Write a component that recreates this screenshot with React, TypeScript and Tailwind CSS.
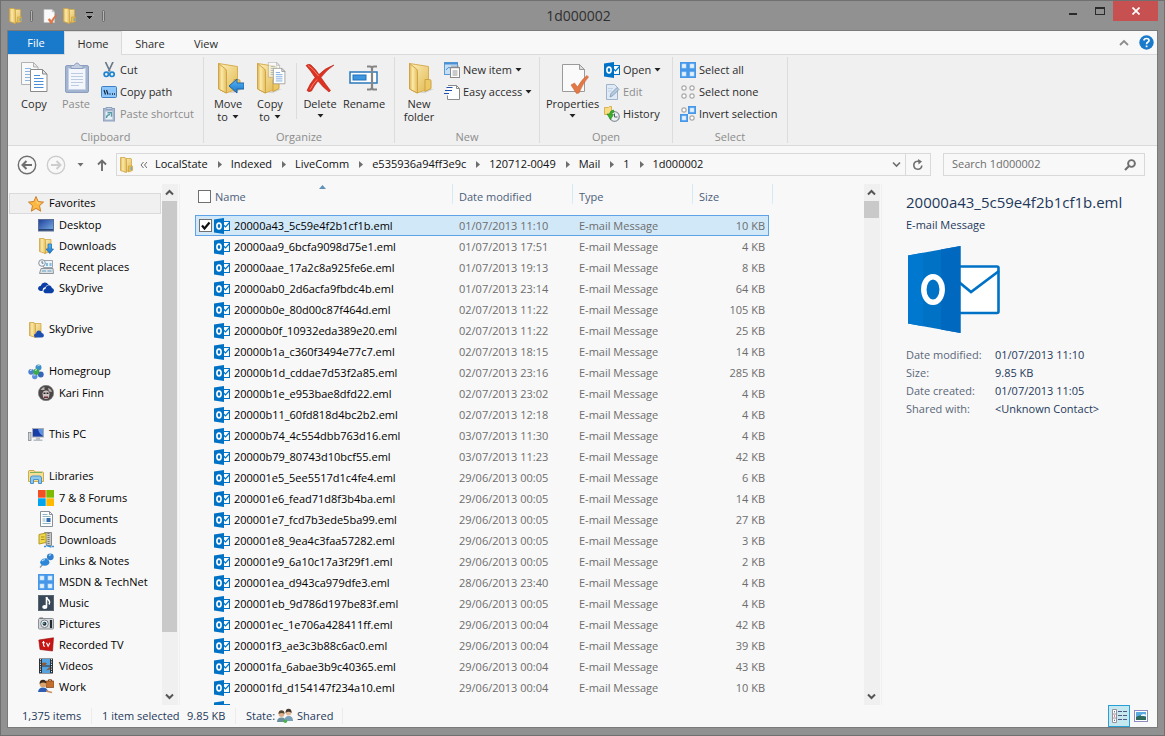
import React from 'react'

type IconProps = { className?: string }

const small = 'size-4 shrink-0'

function Gradients() {
  return (
    <svg className="absolute size-0" aria-hidden="true">
      <defs>
        <linearGradient id="folderFront" x1="0" x2="1">
          <stop offset="0" stopColor="#dcb253" />
          <stop offset="0.4" stopColor="#fbeaa9" />
          <stop offset="1" stopColor="#e5bd5b" />
        </linearGradient>
        <linearGradient id="folderBack" x1="0" y1="0" x2="1" y2="1">
          <stop offset="0" stopColor="#fdf0bd" />
          <stop offset="1" stopColor="#e2b84f" />
        </linearGradient>
        <linearGradient id="blueArrow" x1="0" y1="0" x2="0" y2="1">
          <stop offset="0" stopColor="#5bb8f5" />
          <stop offset="1" stopColor="#1b74c9" />
        </linearGradient>
        <linearGradient id="screen" x1="0" y1="0" x2="1" y2="1">
          <stop offset="0" stopColor="#1c3f9c" />
          <stop offset="1" stopColor="#7fb2e6" />
        </linearGradient>
      </defs>
    </svg>
  )
}

/* ---------- 32px ribbon icons ---------- */

function FolderShape() {
  return (
    <g strokeLinejoin="round">
      <path d="M16 31l11-4 4 0-9 4z" fill="#c9c9c9" opacity="0.7" />
      <path d="M6.500 1.500L25.500 4.500V27L14 31 6.500 27z" fill="url(#folderBack)" stroke="#d8ae50" />
      <path d="M22 17.500h4.500q1.500 0 1.500 1.500v7.500l-6 3z" fill="#ecc964" stroke="#cda242" />
      <path d="M6.500 1.500l7 5.500q1 1 1 2.500V31L7.500 27.500q-1-.5-1-1.500z" fill="url(#folderFront)" stroke="#cfa448" />
    </g>
  )
}

function PageShape({ x, y, faded }: { x: number; y: number; faded?: boolean }) {
  return (
    <g transform={`translate(${x} ${y})`} opacity={faded ? 0.6 : 1}>
      <path d="M.5.500h12l4.500 4.500v17.500H.500z" fill="#fff" stroke="#8a8a8a" />
      <path d="M12.500.500V5H17z" fill="#e4e4e4" stroke="#8a8a8a" />
      <path d="M4 6.500h6M4 9.500h9.500M4 12.500h9.500M4 15.500h9.500M4 18.500h9.500" stroke="#4a8fd6" />
    </g>
  )
}

function CopyIcon() {
  return (
    <svg className="size-8" viewBox="0 0 32 32">
      <PageShape x={3} y={0} faded />
      <PageShape x={12} y={7} />
    </svg>
  )
}

function PasteIcon() {
  return (
    <svg className="size-8" viewBox="0 0 32 32">
      <rect x="5.500" y="3.500" width="23" height="27" rx="1.500" fill="#a3b4d0" stroke="#8c9fc0" />
      <rect x="8.500" y="6.500" width="17" height="21" fill="#f3f7fc" stroke="#c5d2e5" />
      <path d="M11 11.500h12M11 14.500h12M11 17.500h12M11 20.500h12M11 23.500h8" stroke="#bccbe0" />
      <path d="M11 6.500V3.500h3q3-5 6 0h3v3z" fill="#c3cedf" stroke="#8c9fc0" />
    </svg>
  )
}

function MoveToIcon() {
  return (
    <svg className="size-8" viewBox="0 0 32 32">
      <FolderShape />
      <path d="M17 24l8-7v4h7v6h-7v4z" fill="url(#blueArrow)" stroke="#1a66ad" strokeLinejoin="round" />
    </svg>
  )
}

function CopyToIcon() {
  return (
    <svg className="size-8" viewBox="0 0 32 32">
      <g transform="translate(-3 0)">
        <FolderShape />
      </g>
      <g transform="translate(14 0) scale(.68)">
        <PageShape x={0} y={0} faded />
      </g>
      <g transform="translate(19 6) scale(.7)">
        <PageShape x={0} y={0} />
      </g>
    </svg>
  )
}

function NewFolderIcon() {
  return (
    <svg className="size-8" viewBox="0 0 32 32">
      <FolderShape />
    </svg>
  )
}

function DeleteIcon() {
  return (
    <svg className="size-8" viewBox="0 0 32 32">
      <path
        d="M2 3.500q3-2 5-.5 5 4.500 8 9.500Q21 6 30 3q-8 5.500-13 12.500 4 6 9.500 13L25 30q-6-4.500-11-11-4 5-6.500 10-3 1.500-4.500-.5 2.500-6.500 8-13Q7 9 2 3.500z"
        fill="#dd3320"
        stroke="#b32214"
        strokeWidth="0.600"
      />
      <path d="M4 3.500q5 3 10.500 10.500M6 27.500q3-6 7-10" fill="none" stroke="#f2816d" />
    </svg>
  )
}

function RenameIcon() {
  return (
    <svg className="size-8" viewBox="0 0 32 32">
      <rect x="2" y="10" width="27" height="11" fill="#fff" stroke="#2a78bd" strokeWidth="1.500" />
      <rect x="5" y="13" width="13" height="5" fill="#3d96df" stroke="#2173b9" />
      <path d="M19 4.500h3q2 0 2 2v19q0 2 2 2h3M29 4.500h-3q-2 0-2 2M24 25q0 2.500-2 2.500h-3" fill="none" stroke="#858585" strokeWidth="2.200" />
    </svg>
  )
}

function PropertiesIcon({ className = 'size-8' }: IconProps) {
  return (
    <svg className={className} viewBox="0 0 32 32">
      <path d="M5.500 2.500h17l5 5v22h-22z" fill="#fafafa" stroke="#9a9a9a" />
      <path d="M22.500 2.500v5h5z" fill="#ddd" stroke="#9a9a9a" />
      <path d="M14 23l3.500-2 3 4q4-7.500 9.500-11.500l1.500 1.500Q26 21 22 31l-2.500.5z" fill="#e27747" stroke="#cf6535" strokeWidth="0.600" />
    </svg>
  )
}

/* ---------- 16px icons ---------- */

function SmallFolder({ className = small }: IconProps) {
  return (
    <svg className={className} viewBox="0 0 16 16">
      <path d="M5.500 1.500h7.500l.5.500v11l-7 2z" fill="url(#folderBack)" stroke="#d2a848" strokeWidth="0.800" />
      <path d="M10.500 9h4v4.500l-4 1.500z" fill="#e6bd55" stroke="#cda242" strokeWidth="0.700" />
      <path d="M13.200 10v3" stroke="#4aa3e0" />
      <path d="M2.500.500h4.500q1.500 1 1.500 2.500v12.500l-6-2z" fill="url(#folderFront)" stroke="#cfa448" strokeWidth="0.800" />
    </svg>
  )
}

function OutlookIcon() {
  return (
    <svg className={small} viewBox="0 0 16 16">
      <rect x="8" y="3.500" width="7.500" height="9" fill="#fff" stroke="#0072c6" />
      <path d="M9 6.500l2.500 2.500L15.500 4.500" fill="none" stroke="#0072c6" strokeWidth="1.200" />
      <path d="M0 1.500L10 0v16L0 14.500z" fill="#0072c6" />
      <ellipse cx="5" cy="8" rx="2.100" ry="2.900" fill="none" stroke="#fff" strokeWidth="1.600" />
    </svg>
  )
}

function OutlookLarge() {
  return (
    <svg className="h-[87px] w-[92px]" viewBox="0 0 92 87">
      <rect x="45" y="20.500" width="45.500" height="46.500" rx="1.500" fill="#fff" stroke="#0072c6" strokeWidth="2.600" />
      <path d="M46 32l17 14 28-21" fill="none" stroke="#0072c6" strokeWidth="2.800" />
      <path d="M0 9.500L52.500 0v87L0 77.500z" fill="#0072c6" />
      <path d="M0 9.500l15-2.700v73.400L0 77.500z" fill="#0078cf" />
      <path d="M33 3.500L52.500 0v87L33 83.500z" fill="#0069bf" />
      <ellipse cx="25" cy="43.500" rx="9.200" ry="12.800" fill="none" stroke="#fff" strokeWidth="5.500" />
    </svg>
  )
}

function CutIcon() {
  return (
    <svg className={small} viewBox="0 0 16 16">
      <path d="M4.500 0l4.500 9.500M12 0L7.500 9.500" stroke="#68798b" strokeWidth="1.700" />
      <circle cx="5.300" cy="12.300" r="2.200" fill="none" stroke="#1f83cf" strokeWidth="1.700" />
      <circle cx="11" cy="12.300" r="2.200" fill="none" stroke="#1f83cf" strokeWidth="1.700" />
    </svg>
  )
}

function CopyPathIcon() {
  return (
    <svg className={small} viewBox="0 0 16 16">
      <rect x=".5" y="2.500" width="15" height="11" rx="1" fill="#8cc6fa" stroke="#3f7fc4" />
      <path d="M3 6l1.500 4.500M5.500 6L7 10.500" stroke="#10243c" strokeWidth="1.200" />
      <path d="M8.500 10h1M11 10h1M13 10h1" stroke="#10243c" strokeWidth="1.400" />
    </svg>
  )
}

function PasteShortcutIcon() {
  return (
    <svg className={small} viewBox="0 0 16 16">
      <rect x="2.500" y="2.500" width="11" height="12.500" fill="#a9b8cf" stroke="#8ea3bf" />
      <path d="M5 3.500v-2h6v2z" fill="#c5d0df" stroke="#8ea3bf" />
      <rect x="4.500" y="5.500" width="7" height="8" fill="#e7f1f5" />
      <path d="M5.500 12q0-3 3.500-3.500M6.500 6.800h4v4" fill="none" stroke="#5b9aa8" strokeWidth="1.400" />
    </svg>
  )
}

function NewItemIcon() {
  return (
    <svg className={small} viewBox="0 0 16 16">
      <rect x=".5" y=".5" width="13" height="12" fill="#c7dff5" stroke="#5b9bd5" />
      <path d="M0 1.500h14" stroke="#4a90d3" strokeWidth="2" />
      <path d="M2 8q2-4 5-2" fill="none" stroke="#4a90d3" />
      <rect x="6.500" y="5.500" width="9" height="10" fill="#fff" stroke="#8a8a8a" />
      <path d="M8 3.500v3M10 3.500v3M12 3.500v3M14 3.500v3M8.500 9h5M8.500 11h5M8.500 13h5" stroke="#8a8a8a" strokeWidth="0.900" />
    </svg>
  )
}

function EasyAccessIcon() {
  return (
    <svg className={small} viewBox="0 0 16 16">
      <path d="M3.500 1.500h9l3 3v11h-12z" fill="#fff" />
      <path d="M4 1.500h8.500l3 3v11h-12V11.500M12.500 1.500v3h3" fill="none" stroke="#8a8a8a" />
      <path d="M2.500 3.500h6M1 6.500h7M0 9.500h5" stroke="#1d4fae" strokeWidth="1.200" />
    </svg>
  )
}

function EditIcon() {
  return (
    <svg className={small} viewBox="0 0 16 16">
      <path d="M2.500.500h8l3 3v12h-11z" fill="#dfeaf5" stroke="#9fb3ca" />
      <path d="M4 4.500h5M4 7h4" stroke="#c0d2e6" />
      <path d="M6 13l1-3.500 6-6 2 2-6 6z" fill="#b6cadd" stroke="#7c97b3" strokeWidth="0.800" />
    </svg>
  )
}

function HistoryIcon() {
  return (
    <svg className={small} viewBox="0 0 16 16">
      <path d="M.5 1.500h4l1-1h2v8h-7z" fill="#f7dc83" stroke="#d1a53d" strokeWidth="0.800" />
      <circle cx="10.500" cy="10.500" r="4.800" fill="#edf1f4" stroke="#8b949c" strokeWidth="1.300" />
      <path d="M10.500 7.500v3.500h3" fill="none" stroke="#555f69" />
      <path d="M9.500 4q-3.500.5-4 4H3l3.500 5.500L9.500 8.500H7.500q.5-2 2.500-2.500z" fill="#3cb02d" stroke="#1f8416" strokeWidth="0.600" />
    </svg>
  )
}

function SelectSquares({ filled }: { filled: boolean[] }) {
  const spots = [[0, 0], [8, 0], [0, 8], [8, 8]]
  return (
    <svg className={small} viewBox="0 0 16 16">
      {spots.map(([x, y], i) =>
        filled[i] ? (
          <g key={i}>
            <rect x={x} y={y} width="8" height="8" fill="#4797e8" />
            <rect x={x + 2} y={y + 2} width="4" height="4" fill="#e3f1fd" stroke="#b7dafa" strokeWidth="0.600" />
          </g>
        ) : (
          <rect key={i} x={x + 2} y={y + 2} width="4" height="4" rx="1" fill="#fff" stroke="#909090" />
        )
      )}
    </svg>
  )
}

function StarIcon() {
  return (
    <svg className={small} viewBox="0 0 16 16">
      <path d="M8 .5l2.200 5 5.300.6-4 3.600 1.200 5.500L8 12.400l-4.700 2.800 1.200-5.500-4-3.600 5.300-.6z" fill="#fbb944" stroke="#c77822" strokeWidth="0.900" strokeLinejoin="round" />
      <path d="M8 2.500l1.500 4 3.500.5-4 .5z" fill="#fde7a4" />
    </svg>
  )
}

function DesktopIcon() {
  return (
    <svg className={small} viewBox="0 0 16 16">
      <rect x=".5" y="2.500" width="15" height="11.500" fill="url(#screen)" stroke="#5c6f92" />
      <path d="M1 12.800h14" stroke="#27406e" strokeWidth="1.500" />
    </svg>
  )
}

function DownloadsIcon() {
  return (
    <svg className={small} viewBox="0 0 16 16">
      <path d="M5.500 1.500h7.500v12l-6.500 2z" fill="url(#folderBack)" stroke="#d2a848" strokeWidth="0.800" />
      <path d="M1.500.500h4.500l1.500 2v13l-6-2z" fill="url(#folderFront)" stroke="#cfa448" strokeWidth="0.800" />
      <path d="M10 6h3.500v5h2L11.800 15.500 8 11h2z" fill="url(#blueArrow)" stroke="#1a66ad" strokeWidth="0.700" />
    </svg>
  )
}

function RecentIcon() {
  return (
    <svg className={small} viewBox="0 0 16 16">
      <path d="M5.500 1.500h9v7h-9z" fill="#eef3f7" stroke="#9ba5ad" />
      <path d="M8 4h2v3H8zM11.500 4h2v3h-2z" fill="#7dbbe3" />
      <path d="M3 9.500h12l.5 5H1.500z" fill="#dfe3e6" stroke="#8c959c" />
      <path d="M4 12h4M9.500 12h4" stroke="#5f9dc4" />
      <circle cx="4" cy="4" r="3.300" fill="#f4f7fa" stroke="#8693a0" />
      <path d="M4 2v2.200h1.500" fill="none" stroke="#44566b" strokeWidth="0.800" />
    </svg>
  )
}

function SkyDriveIcon() {
  return (
    <svg className={small} viewBox="0 0 16 16">
      <path d="M4.500 11H3q-3-.5-3-2.800Q.2 6 2.800 5.800 3.500 3 6.500 2.600q2.500-.2 3.700 1.800l1 .1Q8 5 7.200 7.200 4.600 7.500 4.500 11z" fill="#0c3fa6" />
      <path d="M7.500 13.200q-2-.3-2.100-2.200.2-2 2.200-2.300Q8 5.500 11 5.300q2.200.1 3 2.700 2 .5 2 2.600-.2 2.300-2.300 2.600z" fill="#0c3fa6" />
    </svg>
  )
}

function SkyFolderIcon() {
  return (
    <svg className={small} viewBox="0 0 16 16">
      <path d="M5.500 1.500h7.500v12l-6.500 2z" fill="url(#folderBack)" stroke="#d2a848" strokeWidth="0.800" />
      <path d="M1.500.500h4.500l1.500 2v13l-6-2z" fill="url(#folderFront)" stroke="#cfa448" strokeWidth="0.800" />
      <path d="M8 15.500q-2-.2-2-2t2-2q.5-3 3-3 2.200 0 2.700 2.500 2.200.4 2.200 2.400 0 2-2 2.100z" fill="#1c4fb0" />
    </svg>
  )
}

function HomegroupIcon() {
  return (
    <svg className={small} viewBox="0 0 16 16">
      <circle cx="10.500" cy="3.500" r="3" fill="#3c8fc9" />
      <circle cx="3.200" cy="7.800" r="2.900" fill="#4b7fd0" />
      <circle cx="12.800" cy="10.500" r="2.900" fill="#3566b8" />
      <circle cx="6.800" cy="12.600" r="2.700" fill="#5b8fdd" />
      <circle cx="8.300" cy="7.800" r="3.100" fill="#3faa4b" />
      <path d="M2 6.800q1-1.200 2-1M9.500 2q1-.8 2-.5M7 6.500q1-1 2-.8M5.500 11.800q1-1 2-.8" fill="none" stroke="#d6ecfb" />
    </svg>
  )
}

function UserPhotoIcon() {
  return (
    <svg className={small} viewBox="0 0 16 16">
      <circle cx="8" cy="8" r="7.700" fill="#4b4747" stroke="#807d7d" strokeWidth="0.600" />
      <path d="M2.500 5q2-3 4-3v3zM10 3q3 .5 4 4l-3-.5z" fill="#b9b3b3" />
      <path d="M4.500 8.500Q5 5.500 8 5.500t3.500 3L11 12q-1 2-3 2t-3-2z" fill="#cfc4c4" />
      <path d="M5.500 8.300h2M8.500 8.300h2" stroke="#2b2424" strokeWidth="1.400" />
      <path d="M6 11.500h4v1.500H6z" fill="#6d3038" />
    </svg>
  )
}

function PcIcon() {
  return (
    <svg className={small} viewBox="0 0 16 16">
      <rect x=".5" y="5.500" width="2.500" height="8" fill="#cfd4d8" stroke="#868d93" strokeWidth="0.800" />
      <rect x="4.500" y="1.500" width="11" height="8.500" fill="#1a3ea8" stroke="#a7adb3" />
      <path d="M10 2l5 0v7q-4-2-5-7z" fill="#5f92e0" />
      <path d="M8 10.500h4v2h2.500v1.500h-9v-1.500H8z" fill="#b9bfc4" />
    </svg>
  )
}

function LibrariesIcon() {
  return (
    <svg className={small} viewBox="0 0 16 16">
      <path d="M.5 12.500V2l.5-.5h5l1 1.500h8l.5.500v9z" fill="#f6df94" stroke="#d1aa4d" />
      <path d="M2 3.500h12" stroke="#79b25b" />
      <path d="M2.500 14.500V9q0-2 2-2h7q2 0 2 2v5.500h-3v-4h-5v4z" fill="#8cc7ee" stroke="#4d93c6" />
    </svg>
  )
}

function WindowsIcon() {
  return (
    <svg className={small} viewBox="0 0 16 16">
      <path d="M0 0h7.700v7.700H0z" fill="#f25022" />
      <path d="M8.300 0H16v7.700H8.300z" fill="#7fba00" />
      <path d="M0 8.300h7.700V16H0z" fill="#00a4ef" />
      <path d="M8.300 8.300H16V16H8.300z" fill="#ffb900" />
    </svg>
  )
}

function DocumentIcon() {
  return (
    <svg className={small} viewBox="0 0 16 16">
      <path d="M2.500.500h9l3 3v12h-12z" fill="#fff" stroke="#8a9299" />
      <path d="M11.500.500v3h3" fill="none" stroke="#8a9299" />
      <path d="M4.500 3.500h5M4.500 5.500h8M4.500 8h3M4.500 10h3M4.500 12.500h8" stroke="#8fb3bd" />
      <rect x="8.500" y="7" width="4" height="4" fill="#2e6bb0" />
    </svg>
  )
}

function ZipIcon() {
  return (
    <svg className={small} viewBox="0 0 16 16">
      <path d="M6.500.500h7v13h-5z" fill="#c5c7c4" stroke="#878a86" />
      <path d="M10.500 1v12" stroke="#77797a" strokeDasharray="1 1" strokeWidth="2" />
      <path d="M1 2.500l7-1.500v9.500L1 12z" fill="#f0d64b" stroke="#b59a25" />
      <path d="M3 5h3.500M3 7.500h3.500" stroke="#a58c1f" />
      <path d="M6 14.500h2M14 14.500h2M8.500 13.500l5 1.500" stroke="#3f8fd6" strokeWidth="1.600" />
    </svg>
  )
}

function PinIcon() {
  return (
    <svg className={small} viewBox="0 0 16 16">
      <path d="M2 14.500l3.500-4" stroke="#8d969d" strokeWidth="1.400" />
      <circle cx="12.300" cy="3.800" r="3.400" fill="#2f7fd0" />
      <path d="M8 5l3 3.500-1.500 2-3-3z" fill="#1f62b0" />
      <ellipse cx="6.800" cy="9.200" rx="4.600" ry="3.600" fill="#2e86d8" />
      <path d="M4 8q1.500-1.500 3-1.200M11 2.500q1-1 2-.5" fill="none" stroke="#b8dcfa" strokeWidth="1.200" />
    </svg>
  )
}

function MusicIcon() {
  return (
    <svg className={small} viewBox="0 0 16 16">
      <rect x=".5" y=".5" width="15" height="15" fill="#384858" stroke="#59656f" />
      <path d="M8.500 2q.5 2 2.500 3.500 1.500 2 0 4" fill="none" stroke="#fff" strokeWidth="1.600" />
      <path d="M8.500 2v9.500" stroke="#fff" strokeWidth="1.600" />
      <ellipse cx="6.800" cy="12" rx="2.600" ry="1.900" fill="#fff" />
    </svg>
  )
}

function CameraIcon() {
  return (
    <svg className={small} viewBox="0 0 16 16">
      <rect x=".5" y="2.500" width="15" height="10.500" rx="1" fill="#d3d7da" stroke="#8a9095" />
      <rect x="1.500" y="1.500" width="3.500" height="1.500" fill="#777" />
      <path d="M13 4v8" stroke="#252a2f" strokeWidth="2.200" />
      <circle cx="6.500" cy="7.800" r="3.800" fill="#f1f3f4" stroke="#777f86" />
      <circle cx="6.500" cy="7.800" r="2" fill="#1e3a45" />
      <circle cx="5.900" cy="7.200" r=".7" fill="#8fd0ea" />
    </svg>
  )
}

function TvIcon() {
  return (
    <svg className={small} viewBox="0 0 16 16">
      <path d="M.8 3L15.500.8 14.500 14 2 12.500z" fill="#c91414" stroke="#930c0c" strokeWidth="0.600" />
      <path d="M5.500 4v4q0 1.300 1.600 1.200M4 5.700h3M8.500 5.700l1.600 3.500 1.800-3.500" fill="none" stroke="#fff" strokeWidth="1.100" />
    </svg>
  )
}

function VideoIcon() {
  return (
    <svg className={small} viewBox="0 0 16 16">
      <rect x="1" y=".5" width="14" height="15" fill="#2c3137" />
      <path d="M2.500 1v14M13.500 1v14" stroke="#dfe4e8" strokeDasharray="1.200 1.200" />
      <rect x="4" y="1" width="8" height="6.500" fill="#53a4e0" />
      <rect x="4" y="8.500" width="8" height="6.500" fill="#53a4e0" />
      <path d="M4 7.500V5q3-1 5 .5L7 7.500zM12 8.500v3l-4 1z" fill="#8a5a3a" />
    </svg>
  )
}

function WorkIcon() {
  return (
    <svg className={small} viewBox="0 0 16 16">
      <rect x="8" y="2" width="8" height="6.500" rx=".5" fill="#c46f2e" stroke="#7d4318" strokeWidth="0.700" />
      <path d="M10.500 2V.8h3V2" fill="none" stroke="#7d4318" />
      <path d="M0 13q.5-4.500 5-4.500t5 4.500z" fill="#2f5fb4" />
      <path d="M8 12l6 1.500" stroke="#c89060" strokeWidth="1.600" />
      <circle cx="5" cy="5" r="3.300" fill="#dba36e" />
      <path d="M1.600 5Q1.500.8 5 .8q3.500 0 3.400 3.700Q5 2.500 1.600 5z" fill="#3b2819" />
    </svg>
  )
}

function SharedIcon() {
  return (
    <svg className={small} viewBox="0 0 16 16">
      <path d="M0 14q0-4.500 4.500-4.500T9 14z" fill="#6c8f9e" />
      <circle cx="4.500" cy="6" r="2.900" fill="#dcb08c" />
      <path d="M1.500 6Q1.300 2.500 4.500 2.300 7.700 2.500 7.500 6 5 3.800 1.500 6z" fill="#5a4630" />
      <path d="M7.500 13q0-5 4.300-5t4.200 5z" fill="#7a9fb8" />
      <circle cx="11.600" cy="4.500" r="2.900" fill="#e3bb98" />
      <path d="M8.600 5Q8.400.9 11.600.8q3.200.1 3 4.200-3-2.500-6 0z" fill="#46382c" />
      <circle cx="8.300" cy="13.300" r="1.800" fill="#49b34a" />
    </svg>
  )
}

function Caret({ className = 'text-[#222]' }: IconProps) {
  return (
    <svg className={`inline-block h-1 w-[7px] shrink-0 ${className}`} viewBox="0 0 7 4">
      <path d="M.5 0h6l-3 3.500z" fill="currentColor" />
    </svg>
  )
}

/* ---------- ribbon ---------- */

interface BigButtonProps {
  icon: React.ReactNode
  lines: string[]
  caret?: boolean
  disabled?: boolean
  width?: string
}

function BigButton({ icon, lines, caret, disabled, width = 'w-[42px]' }: BigButtonProps) {
  const caretAlone = caret && lines.length === 1
  return (
    <button disabled={disabled} className={`flex flex-col items-center pt-[3px] leading-[13px] ${width} ${disabled ? 'text-[#8c8c8c]' : ''}`}>
      {icon}
      <span className="mt-[3px] whitespace-nowrap">{lines[0]}</span>
      {lines[1] && (
        <span className="flex items-center gap-1 whitespace-nowrap">
          {lines[1]}
          {caret && <Caret />}
        </span>
      )}
      {caretAlone && <Caret className="mt-1 text-[#222]" />}
    </button>
  )
}

interface SmallButtonProps {
  icon: React.ReactNode
  label: string
  caret?: boolean
  disabled?: boolean
}

function SmallButton({ icon, label, caret, disabled }: SmallButtonProps) {
  return (
    <button disabled={disabled} className={`flex h-[22px] items-center gap-[3px] px-0.5 whitespace-nowrap ${disabled ? 'text-[#8c8c8c]' : ''}`}>
      {icon}
      <span>{label}</span>
      {caret && <Caret />}
    </button>
  )
}

function RibbonGroup({ label, width, children }: { label: string; width: string; children: React.ReactNode }) {
  return (
    <section className={`my-0.5 flex shrink-0 flex-col border-r border-[#dcdcdc] ${width}`}>
      <div className="flex flex-1 items-start pt-0.5 pl-[3px]">{children}</div>
      <h2 className="text-center leading-[13px] text-[#8c8c8c]">{label}</h2>
    </section>
  )
}

function Ribbon() {
  return (
    <div className="flex h-[92px] shrink-0 border-y border-[#d9dadb] bg-[#f0f0f0] text-[#2b2b2b]">
      <RibbonGroup label="Clipboard" width="w-[196px]">
        <div className="flex pl-0.5">
          <BigButton icon={<CopyIcon />} lines={['Copy']} />
          <BigButton icon={<PasteIcon />} lines={['Paste']} disabled />
        </div>
        <div className="flex flex-col pl-0.5">
          <SmallButton icon={<CutIcon />} label="Cut" />
          <SmallButton icon={<CopyPathIcon />} label="Copy path" />
          <SmallButton icon={<PasteShortcutIcon />} label="Paste shortcut" disabled />
        </div>
      </RibbonGroup>
      <RibbonGroup label="Organize" width="w-[191px]">
        <BigButton icon={<MoveToIcon />} lines={['Move', 'to']} caret />
        <BigButton icon={<CopyToIcon />} lines={['Copy', 'to']} caret />
        <div className="mt-1 mr-0.5 ml-[5px] h-14 w-px bg-[#dcdcdc]" />
        <BigButton icon={<DeleteIcon />} lines={['Delete']} caret />
        <BigButton icon={<RenameIcon />} lines={['Rename']} width="w-[46px]" />
      </RibbonGroup>
      <RibbonGroup label="New" width="w-[145px]">
        <BigButton icon={<NewFolderIcon />} lines={['New', 'folder']} />
        <div className="flex flex-col pl-0.5">
          <SmallButton icon={<NewItemIcon />} label="New item" caret />
          <SmallButton icon={<EasyAccessIcon />} label="Easy access" caret />
        </div>
      </RibbonGroup>
      <RibbonGroup label="Open" width="w-[133px]">
        <BigButton icon={<PropertiesIcon />} lines={['Properties']} caret width="w-[59px]" />
        <div className="flex flex-col">
          <SmallButton icon={<OutlookIcon />} label="Open" caret />
          <SmallButton icon={<EditIcon />} label="Edit" disabled />
          <SmallButton icon={<HistoryIcon />} label="History" />
        </div>
      </RibbonGroup>
      <RibbonGroup label="Select" width="w-[115px]">
        <div className="flex flex-col pl-0.5">
          <SmallButton icon={<SelectSquares filled={[true, true, true, true]} />} label="Select all" />
          <SmallButton icon={<SelectSquares filled={[false, false, false, false]} />} label="Select none" />
          <SmallButton icon={<SelectSquares filled={[false, true, true, false]} />} label="Invert selection" />
        </div>
      </RibbonGroup>
    </div>
  )
}

/* ---------- window chrome ---------- */

function TitleBar() {
  return (
    <header className="flex h-[29px] shrink-0 items-start">
      <div className="flex h-full w-[192px] items-center pl-1.5">
        <SmallFolder />
        <div className="ml-[7px] h-3 w-[3px] rounded-sm border border-[#6b6b6b] bg-[#b5b5b5]" />
        <button aria-label="Properties" className="ml-2">
          <PropertiesIcon className="size-4" />
        </button>
        <button aria-label="New folder" className="ml-1">
          <SmallFolder />
        </button>
        <button aria-label="Customize" className="mx-2">
          <svg className="h-2 w-[9px]" viewBox="0 0 9 8">
            <path d="M1 .5h7" stroke="#111" />
            <path d="M.5 3.500h8L4.500 7.500z" fill="#111" stroke="#ddd" strokeWidth="0.500" />
          </svg>
        </button>
        <div className="h-3 w-[3px] rounded-sm border border-[#6b6b6b] bg-[#b5b5b5]" />
      </div>
      <h1 className="flex-1 text-center text-sm leading-[29px] text-[#2f2f2f]">1d000002</h1>
      <div className="mr-[6px] flex w-[194px] justify-end">
        <button aria-label="Minimize" className="flex h-5 w-[27px] justify-center pt-3">
          <span className="h-0.5 w-2 bg-[#2a2a2a]" />
        </button>
        <button aria-label="Maximize" className="flex h-5 w-[27px] justify-center pt-1.5">
          <span className="h-2 w-2.5 border border-t-2 border-[#2a2a2a]" />
        </button>
        <button aria-label="Close" className="flex h-5 w-[45px] items-center justify-center bg-[#c75050]">
          <svg className="size-2" viewBox="0 0 8 8">
            <path d="M.5.500l7 7M7.500.500l-7 7" stroke="#fff" strokeWidth="1.700" />
          </svg>
        </button>
      </div>
    </header>
  )
}

function TabBar() {
  return (
    <nav className="flex h-[23px] shrink-0 items-stretch text-[#2b2b2b]">
      <button className="w-14 bg-[#1979ca] pt-px text-white">File</button>
      <button className="z-10 -mb-px w-[58px] border-x border-t border-[#d9dadb] bg-[#f0f0f0] pt-0.5">Home</button>
      <button className="w-14 pt-[3px]">Share</button>
      <button className="w-14 pt-[3px]">View</button>
      <div className="ml-auto flex items-center gap-2.5 pr-[3px]">
        <button aria-label="Collapse ribbon">
          <svg className="h-2 w-2.5" viewBox="0 0 10 8">
            <path d="M1 6l4-4 4 4" fill="none" stroke="#8c8c8c" strokeWidth="1.800" />
          </svg>
        </button>
        <button aria-label="Help">
          <svg className="size-[15px]" viewBox="0 0 15 15">
            <circle cx="7.500" cy="7.500" r="7.200" fill="#1979ca" />
            <path d="M5 5.500Q5 3.500 7.500 3.500T10 5.400Q10 6.600 8.600 7.300 7.600 7.800 7.600 9.200" fill="none" stroke="#fff" strokeWidth="1.700" />
            <path d="M6.700 10.500h1.800v1.700H6.700z" fill="#fff" />
          </svg>
        </button>
      </div>
    </nav>
  )
}

const crumbs = ['LocalState', 'Indexed', 'LiveComm', 'e535936a94ff3e9c', '120712-0049', 'Mail', '1', '1d000002']

function AddressBar() {
  return (
    <div className="flex h-[37px] shrink-0 items-center pr-3 pl-[9px] text-[#111]">
      <button aria-label="Back">
        <svg className="size-5" viewBox="0 0 20 20" fill="none" stroke="#6e6e6e">
          <circle cx="10" cy="10" r="8.700" strokeWidth="1.400" />
          <path d="M15 10H6M9.500 6L5.500 10l4 4" strokeWidth="2" />
        </svg>
      </button>
      <button aria-label="Forward" className="ml-[9px]" disabled>
        <svg className="size-5" viewBox="0 0 20 20" fill="none" stroke="#cdcdcd">
          <circle cx="10" cy="10" r="8.700" strokeWidth="1.400" />
          <path d="M5 10h9M10.500 6l4 4-4 4" strokeWidth="2" />
        </svg>
      </button>
      <button aria-label="Recent locations" className="ml-[11px] flex w-[7px]">
        <Caret className="text-[#6e6e6e]" />
      </button>
      <button aria-label="Up" className="mr-[9px] ml-[13px]">
        <svg className="h-3 w-2.5" viewBox="0 0 10 12">
          <path d="M5 12V2M1 5.500l4-4 4 4" fill="none" stroke="#6e6e6e" strokeWidth="1.900" />
        </svg>
      </button>
      <div className="flex h-[23px] min-w-0 flex-1 items-center border border-[#d9d9d9]">
        <span className="ml-px">
          <SmallFolder />
        </span>
        <svg className="mr-2 ml-1.5 h-2 w-[7px] shrink-0" viewBox="0 0 7 8">
          <path d="M3.500 1L1 4l2.500 3M7 1L4.500 4 7 7" fill="none" stroke="#6e6e6e" />
        </svg>
        <ol className="flex items-center">
          {crumbs.map((crumb, i) => (
            <li key={crumb} className="flex items-center">
              {i > 0 && (
                <svg className="mr-[9px] ml-2.5 h-[7px] w-1" viewBox="0 0 4 7">
                  <path d="M0 0l4 3.500L0 7z" fill="#6e6e6e" />
                </svg>
              )}
              <a href="#" className="whitespace-nowrap">{crumb}</a>
            </li>
          ))}
        </ol>
        <button aria-label="Previous locations" className="mr-1 ml-auto">
          <svg className="h-[7px] w-[9px]" viewBox="0 0 9 7">
            <path d="M1 1.500l3.500 3.500L8 1.500" fill="none" stroke="#6e6e6e" strokeWidth="1.600" />
          </svg>
        </button>
        <button aria-label="Refresh" className="flex h-full w-[25px] items-center justify-center border-l border-[#d9d9d9]">
          <svg className="size-3" viewBox="0 0 12 12">
            <path d="M7 2.200H5.500A4 4 0 1 0 9.800 6.500" fill="none" stroke="#6e6e6e" strokeWidth="1.600" />
            <path d="M6 0l4 2.500L6.500 5.500z" fill="#6e6e6e" />
          </svg>
        </button>
      </div>
      <label className="ml-3 flex h-[23px] w-[202px] items-center border border-[#d9d9d9] px-2">
        <input aria-label="Search" placeholder="Search 1d000002" className="min-w-0 flex-1 bg-transparent outline-none placeholder:text-[#6d6d6d]" />
        <svg className="h-3 w-3" viewBox="0 0 12 12">
          <circle cx="7.500" cy="4.500" r="3.400" fill="none" stroke="#6e6e6e" strokeWidth="1.900" />
          <path d="M5 7L1 11" stroke="#6e6e6e" strokeWidth="2.200" />
        </svg>
      </label>
    </div>
  )
}

function ScrollBar({ thumb }: { thumb: string }) {
  return (
    <div className="mr-px flex w-4 shrink-0 flex-col bg-[#f0f0f0]">
      <svg className="my-[5px] ml-[3px] h-[7px] w-[9px] shrink-0" viewBox="0 0 9 7">
        <path d="M1 5.500L4.500 2 8 5.500" fill="none" stroke="#555" strokeWidth="2" />
      </svg>
      <div className="flex flex-1 flex-col">
        <div className={`w-[15px] bg-[#c9c9c9] ${thumb}`} />
      </div>
      <svg className="my-[5px] ml-[3px] h-[7px] w-[9px] shrink-0" viewBox="0 0 9 7">
        <path d="M1 1.500L4.500 5 8 1.500" fill="none" stroke="#555" strokeWidth="2" />
      </svg>
    </div>
  )
}

/* ---------- navigation pane ---------- */

interface NavGroup {
  label: string
  icon: React.ReactNode
  active?: boolean
  items: { label: string; icon: React.ReactNode }[]
}

const navGroups: NavGroup[] = [
  {
    label: 'Favorites',
    icon: <StarIcon />,
    active: true,
    items: [
      { label: 'Desktop', icon: <DesktopIcon /> },
      { label: 'Downloads', icon: <DownloadsIcon /> },
      { label: 'Recent places', icon: <RecentIcon /> },
      { label: 'SkyDrive', icon: <SkyDriveIcon /> }
    ]
  },
  { label: 'SkyDrive', icon: <SkyFolderIcon />, items: [] },
  { label: 'Homegroup', icon: <HomegroupIcon />, items: [{ label: 'Kari Finn', icon: <UserPhotoIcon /> }] },
  { label: 'This PC', icon: <PcIcon />, items: [] },
  {
    label: 'Libraries',
    icon: <LibrariesIcon />,
    items: [
      { label: '7 & 8 Forums', icon: <WindowsIcon /> },
      { label: 'Documents', icon: <DocumentIcon /> },
      { label: 'Downloads', icon: <ZipIcon /> },
      { label: 'Links & Notes', icon: <PinIcon /> },
      { label: 'MSDN & TechNet', icon: <SelectSquares filled={[true, true, true, true]} /> },
      { label: 'Music', icon: <MusicIcon /> },
      { label: 'Pictures', icon: <CameraIcon /> },
      { label: 'Recorded TV', icon: <TvIcon /> },
      { label: 'Videos', icon: <VideoIcon /> },
      { label: 'Work', icon: <WorkIcon /> }
    ]
  }
]

function NavPane() {
  return (
    <nav className="flex w-[154px] shrink-0 flex-col gap-[21px] overflow-hidden pt-[9px] pr-px pl-px text-black">
      {navGroups.map((group) => (
        <div key={group.label}>
          <a
            href="#"
            className={`flex h-[21px] items-center gap-[5px] border pl-[18px] ${group.active ? 'border-[#dadada] bg-[#f0f0f0]' : 'border-transparent'}`}
          >
            {group.icon}
            {group.label}
          </a>
          {group.items.map((item) => (
            <a key={item.label} href="#" className="flex h-[21px] items-center gap-[5px] pt-px pl-[29px] whitespace-nowrap">
              {item.icon}
              {item.label}
            </a>
          ))}
        </div>
      ))}
    </nav>
  )
}

/* ---------- file list ---------- */

const files = [
  ['20000a43_5c59e4f2b1cf1b.eml', '01/07/2013 11:10', '10 KB'],
  ['20000aa9_6bcfa9098d75e1.eml', '01/07/2013 17:51', '4 KB'],
  ['20000aae_17a2c8a925fe6e.eml', '01/07/2013 19:13', '8 KB'],
  ['20000ab0_2d6acfa9fbdc4b.eml', '01/07/2013 23:14', '64 KB'],
  ['20000b0e_80d00c87f464d.eml', '02/07/2013 11:22', '105 KB'],
  ['20000b0f_10932eda389e20.eml', '02/07/2013 11:22', '25 KB'],
  ['20000b1a_c360f3494e77c7.eml', '02/07/2013 18:15', '14 KB'],
  ['20000b1d_cddae7d53f2a85.eml', '02/07/2013 23:16', '285 KB'],
  ['20000b1e_e953bae8dfd22.eml', '02/07/2013 23:02', '4 KB'],
  ['20000b11_60fd818d4bc2b2.eml', '02/07/2013 12:18', '4 KB'],
  ['20000b74_4c554dbb763d16.eml', '03/07/2013 11:30', '4 KB'],
  ['20000b79_80743d10bcf55.eml', '03/07/2013 11:23', '42 KB'],
  ['200001e5_5ee5517d1c4fe4.eml', '29/06/2013 00:05', '6 KB'],
  ['200001e6_fead71d8f3b4ba.eml', '29/06/2013 00:05', '14 KB'],
  ['200001e7_fcd7b3ede5ba99.eml', '29/06/2013 00:05', '27 KB'],
  ['200001e8_9ea4c3faa57282.eml', '29/06/2013 00:05', '3 KB'],
  ['200001e9_6a10c17a3f29f1.eml', '29/06/2013 00:05', '2 KB'],
  ['200001ea_d943ca979dfe3.eml', '28/06/2013 23:40', '4 KB'],
  ['200001eb_9d786d197be83f.eml', '29/06/2013 00:05', '4 KB'],
  ['200001ec_1e706a428411ff.eml', '29/06/2013 00:04', '42 KB'],
  ['200001f3_ae3c3b88c6ac0.eml', '29/06/2013 00:04', '39 KB'],
  ['200001fa_6abae3b9c40365.eml', '29/06/2013 00:04', '43 KB'],
  ['200001fd_d154147f234a10.eml', '29/06/2013 00:04', '10 KB'],
  ['200002c0_2848b242126b5.eml', '29/06/2013 00:03', '16 KB']
]

function HeaderCell({ label }: { label: string }) {
  return (
    <th className="relative p-0 text-left font-normal">
      <span className="absolute top-0 left-[-1px] h-5 w-px bg-[#d7ebf7]" />
      <div className="h-[31px] pl-1.5 leading-[26px]">{label}</div>
    </th>
  )
}

function FileList() {
  return (
    <main className="min-w-0 flex-1 overflow-hidden border-l border-[#f0f0f0] pl-[15px]">
      <table className="w-[578px] table-fixed border-separate border-spacing-0">
        <colgroup>
          <col className="w-[258px]" />
          <col className="w-[120px]" />
          <col className="w-[120px]" />
          <col className="w-[76px]" />
          <col className="w-1" />
        </colgroup>
        <thead className="text-[#4c607a]">
          <tr>
            <th className="relative p-0 text-left font-normal">
              <svg className="absolute top-px left-[124px] h-1 w-[7px]" viewBox="0 0 7 4">
                <path d="M0 4l3.500-4L7 4z" fill="#5f93b8" />
              </svg>
              <div className="flex h-[31px] items-start pl-[3px] leading-[26px]">
                <input type="checkbox" aria-label="Select all items" className="mt-1.5 size-[13px] appearance-none border border-[#707070] bg-white" />
                <span className="pl-1">Name</span>
              </div>
            </th>
            <HeaderCell label="Date modified" />
            <HeaderCell label="Type" />
            <HeaderCell label="Size" />
            <th className="relative p-0">
              <span className="absolute top-0 right-0 h-5 w-px bg-[#d7ebf7]" />
            </th>
          </tr>
        </thead>
        <tbody className="text-[#6d6d6d]">
          {files.map(([name, date, size], i) => {
            const selected = i === 0
            const cell = selected ? 'h-[21px] border-y border-[#5fa2e6] bg-[#d1e8f8]' : 'h-[21px] border-y border-transparent'
            return (
              <tr key={name}>
                <td className={`${cell} border-l p-0`}>
                  <div className="flex items-center text-black">
                    <span className="w-[18px] pl-[3px]">
                      {selected && (
                        <label className="relative block size-[13px]">
                          <input type="checkbox" defaultChecked aria-label={name} className="block size-[13px] appearance-none border border-[#707070] bg-white" />
                          <svg className="absolute inset-0 size-[13px]" viewBox="0 0 13 13">
                            <path d="M3 6.500L5.500 9.500 10.500 3.500" fill="none" stroke="#111" strokeWidth="2.200" />
                          </svg>
                        </label>
                      )}
                    </span>
                    <OutlookIcon />
                    <span className="pl-1 leading-4 whitespace-nowrap">{name}</span>
                  </div>
                </td>
                <td className={`${cell} p-0 pl-1.5 leading-4`}>{date}</td>
                <td className={`${cell} p-0 pl-1.5 leading-4`}>E-mail Message</td>
                <td className={`${cell} border-r p-0 pr-[3px] text-right leading-4`}>{size}</td>
                <td className="p-0" />
              </tr>
            )
          })}
        </tbody>
      </table>
    </main>
  )
}

/* ---------- details pane ---------- */

const details = [
  ['Date modified:', '01/07/2013 11:10'],
  ['Size:', '9.85 KB'],
  ['Date created:', '01/07/2013 11:05'],
  ['Shared with:', '<Unknown Contact>']
]

function DetailsPane() {
  return (
    <aside className="w-[276px] shrink-0 border-l border-[#f0f0f0] pt-2 pl-6 text-[#1e395b]">
      <h2 className="text-[15px] leading-5">{files[0][0]}</h2>
      <p className="mt-[5px] mb-[13px] leading-4">E-mail Message</p>
      <div className="pl-0.5">
        <OutlookLarge />
      </div>
      <dl className="mt-[13px] grid grid-cols-[89px_1fr] leading-[18px]">
        {details.map(([term, value]) => (
          <React.Fragment key={term}>
            <dt className="text-[#5a6779]">{term}</dt>
            <dd className="whitespace-nowrap">{value}</dd>
          </React.Fragment>
        ))}
      </dl>
    </aside>
  )
}

function StatusBar() {
  return (
    <footer className="flex h-[22px] shrink-0 items-center pl-3.5 text-[#1e395b]">
      <span className="w-[69px]">1,375 items</span>
      <span className="h-4 w-px bg-[#ececec]" />
      <span className="w-[95px] pl-2.5 whitespace-nowrap">1 item selected</span>
      <span className="w-12 whitespace-nowrap">9.85 KB</span>
      <span className="h-4 w-px bg-[#ececec]" />
      <span className="flex w-[106px] items-center pl-2.5">
        State:
        <span className="mr-1 ml-0.5">
          <SharedIcon />
        </span>
        Shared
      </span>
      <span className="h-4 w-px bg-[#ececec]" />
      <div className="mr-2 ml-auto flex h-full items-center gap-1 pr-px">
        <button aria-label="Details view" className="flex h-full w-[22px] items-center justify-center border border-[#2a9fd6] bg-[#c5e8f0]">
          <svg className="h-3.5 w-4" viewBox="0 0 16 14">
            <path d="M1.500.500h4v13h-4zM1.500 5h4M1.500 9h4" fill="#fff" stroke="#9a8f9c" />
            <path d="M3 2.800h1M3 11.300h1" stroke="#3a4a66" />
            <path d="M3 7h1" stroke="#d11" />
            <path d="M7 2.500h4M12 2.500h4M7 6.500h4M12 6.500h4M7 10.500h4M12 10.500h4" stroke="#4d5b80" />
          </svg>
        </button>
        <button aria-label="Large icons view">
          <svg className="h-3 w-3.5" viewBox="0 0 14 12">
            <rect x=".5" y=".5" width="13" height="11" fill="#fff" stroke="#8c8cc0" />
            <rect x="2" y="2" width="10" height="8" fill="#5cabe0" />
            <path d="M2 7q4-3 10 0v3H2z" fill="#2f6a5c" />
            <path d="M7 5q3-2 5 0v1H7z" fill="#eef6fb" />
          </svg>
        </button>
      </div>
    </footer>
  )
}

export default function App() {
  return (
    <div className="flex h-screen flex-col overflow-hidden border border-[#707070] bg-[#919191] font-['Open_Sans',sans-serif] text-[11px]">
      <Gradients />
      <TitleBar />
      <div className="mx-1.5 mb-[7px] flex min-h-0 flex-1 flex-col border border-[#7a7a7a] bg-[#f8f8f8]">
        <TabBar />
        <Ribbon />
        <AddressBar />
        <div className="flex min-h-0 flex-1 pt-px">
          <NavPane />
          <ScrollBar thumb="h-[431px]" />
          <FileList />
          <ScrollBar thumb="h-[17px]" />
          <DetailsPane />
        </div>
        <StatusBar />
      </div>
    </div>
  )
}
